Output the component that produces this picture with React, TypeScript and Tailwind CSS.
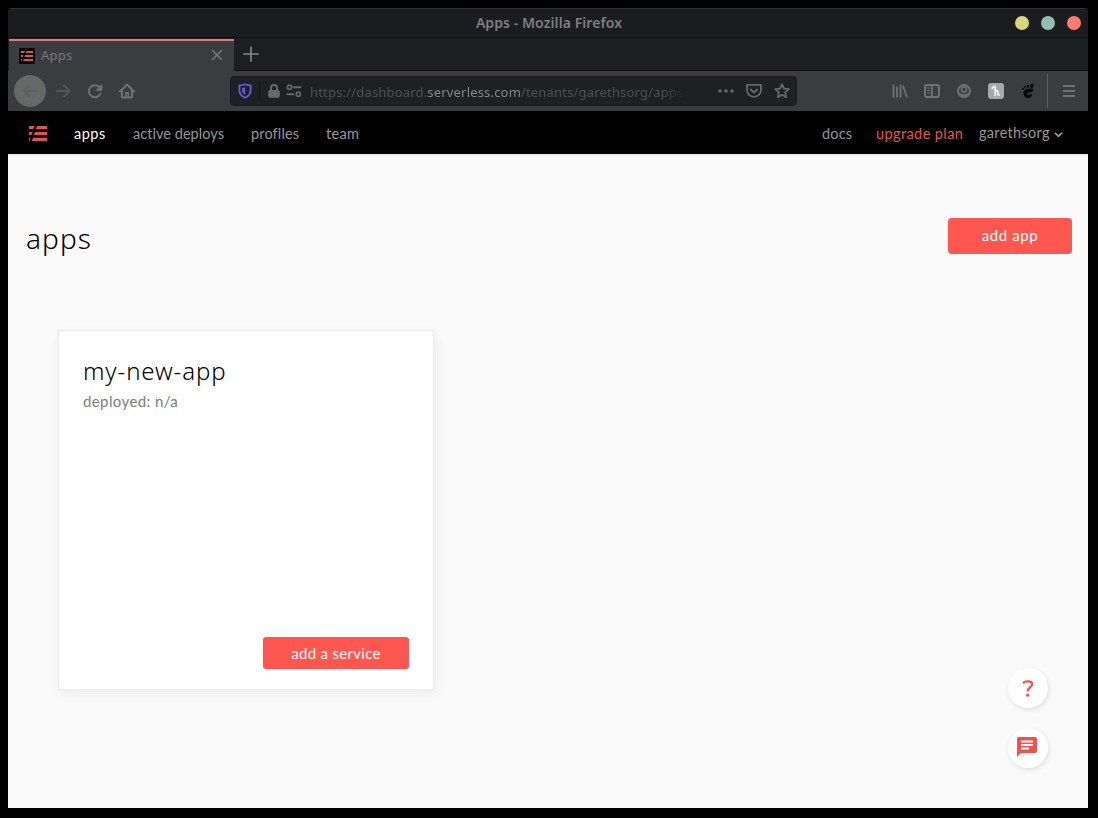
import React from "react";

const chrome = "font-['Noto_Sans',sans-serif]";
const page = "font-['Lato','Noto_Sans',sans-serif]";

function Logo({ className }: { className: string }) {
  return (
    <svg viewBox="0 0 18 15" className={className} fill="currentColor" preserveAspectRatio="none">
      <path d="M0 0h5.500L4.300 3.200H0zM8 0H18v3.200H6.800zM0 5.900h3.600L2.400 9.100H0zM6 5.900H18v3.200H4.800zM0 11.800h1.700L.5 15H0zM4 11.800H18V15H2.800z" />
    </svg>
  );
}

type IconProps = { className?: string; children: React.ReactNode };

function Icon({ className = "h-4 w-4", children }: IconProps) {
  return (
    <svg
      viewBox="0 0 16 16"
      className={`shrink-0 ${className}`}
      fill="none"
      stroke="currentColor"
      strokeWidth="2"
      strokeLinecap="round"
      strokeLinejoin="round"
    >
      {children}
    </svg>
  );
}

function TitleBar() {
  return (
    <div className="flex h-[30px] shrink-0 items-center rounded-t-[3px] border-t border-[#303133] border-b border-b-[#101113] bg-[#1b1c1f]">
      <div className="w-[106px]" />
      <div className="flex-1 pb-[2px] text-center">
        <span className="-ml-[22px] text-[14px] font-semibold leading-none tracking-[0.08px] text-[#7d7e82] whitespace-nowrap">
          Apps - Mozilla Firefox
        </span>
      </div>
      <div className="flex w-[82px] gap-3 pl-[9px]">
        <span className="h-[14px] w-[14px] rounded-full bg-[#d8d67c]" />
        <span className="h-[14px] w-[14px] rounded-full bg-[#97bcb1]" />
        <span className="h-[14px] w-[14px] rounded-full bg-[#ff7c70]" />
      </div>
    </div>
  );
}

function TabBar() {
  return (
    <div className="flex h-[33px] shrink-0 bg-[#1b1f22] pl-px pt-px">
      <div className="flex w-[225px] items-center border-t-2 border-[#d57e7c] bg-[#3b3c3f] pl-[10px] pr-[11px]">
        <div className="mb-px flex h-4 w-4 items-center justify-center bg-black text-[#dc5553]">
          <svg viewBox="0 0 12 10" className="h-[10px] w-3" fill="currentColor">
            <path d="M0 0h4L3.200 2H0zM5.600 0H12v2H4.800zM0 4h2.500L1.700 6H0zM4.200 4H12v2H3.400zM0 8h1.200L.5 10H0zM2.800 8H12v2H2z" />
          </svg>
        </div>
        <span className="ml-[6px] flex-1 pb-[2px] text-[13px] leading-none tracking-[0.2px] text-[#77787b]">Apps</span>
        <Icon className="mb-[2px] h-3 w-3 text-[#77787b]">
          <path d="M2 2l12 12M14 2L2 14" />
        </Icon>
      </div>
      <div className="flex flex-1 items-center border-b border-[#0d0f11] pl-[9px] pb-px text-[#85878a]">
        <Icon>
          <path d="M8 1v14M1 8h14" strokeWidth="1.700" />
        </Icon>
      </div>
    </div>
  );
}

function AddressBar() {
  return (
    <div className="flex h-[30px] w-[567px] items-center rounded-[4px] border border-[#191c1f] bg-[#1e2123] pl-[6px] pr-[6px] text-[#66686a]">
      <Icon className="h-4 w-4 text-[#6958d8]">
        <path d="M8 1.2c2 .9 4 1.2 5.600 1.200v4.800c0 3.500-2.200 6-5.600 7.600-3.400-1.600-5.600-4.100-5.600-7.600V2.400C4 2.400 6 2.100 8 1.200z" strokeWidth="1.8" />
        <path d="M8.200 4.300v7.600C6 10.500 5 9 5 7V5c1.200 0 2.200-.3 3.200-.7z" fill="currentColor" stroke="none" />
      </Icon>
      <div className="ml-[6px] h-5 w-px bg-[#121417]" />
      <Icon className="ml-[6px] h-4 w-4">
        <path d="M5 7.500V5a3 3 0 0 1 6 0v2.500" />
        <rect x="2.700" y="7.500" width="10.600" height="6.700" rx="1" fill="currentColor" strokeWidth="1" />
      </Icon>
      <Icon className="ml-[4px] h-4 w-4">
        <circle cx="3.500" cy="4.200" r="2.100" strokeWidth="1.700" />
        <circle cx="12.300" cy="11.300" r="2.100" strokeWidth="1.700" />
        <path d="M8 4.200h6.500M1.500 11.300h6" strokeWidth="2" />
      </Icon>
      <div className="ml-2 w-[386px] whitespace-nowrap pt-px text-[13px] leading-[20px] tracking-[0.18px] text-[#4d4f52] [mask-image:linear-gradient(to_right,black_352px,transparent_374px)]">
        https://dashboard.<span className="text-[#858789]">serverless.com</span>/tenants/garethsorg/apps
      </div>
      <div className="flex flex-1 justify-end gap-3">
        <Icon>
          <path d="M2 8h.01M8 8h.01M14 8h.01" strokeWidth="3.600" />
        </Icon>
        <Icon>
          <path d="M1 1.800h14v5.500a7 6.500 0 0 1-14 0z" strokeWidth="1.800" />
          <path d="M4.800 6.500L8 9.500l3.200-3" />
        </Icon>
        <Icon>
          <path d="M8 1.200l2 4.400 4.800.5-3.600 3.200 1 4.900L8 11.800l-4.200 2.400 1-4.900L1.200 6.100 6 5.600z" strokeWidth="1.800" />
        </Icon>
      </div>
    </div>
  );
}

function Toolbar() {
  return (
    <div className="flex h-[40px] shrink-0 items-center bg-[#3b3c3f] pl-[6px] text-[#707173]">
      <div className="flex h-8 w-8 items-center justify-center rounded-full bg-[#666767] text-[#606161]">
        <Icon>
          <path d="M14 8H2M7 3L2 8l5 5" />
        </Icon>
      </div>
      <Icon className="ml-[9px] h-4 w-4 text-[#545558]">
        <path d="M1.500 8h13M9 2.500L14.500 8 9 13.500" strokeWidth="1.800" />
      </Icon>
      <Icon className="ml-4 h-4 w-4">
        <path d="M12.800 4.800A6 6 0 1 0 13.500 10.500" />
        <path d="M15 1.500v6H9z" fill="currentColor" strokeWidth=".6" />
      </Icon>
      <Icon className="ml-4 h-4 w-4">
        <path d="M1 8.500L8 1.500l7 7M3 8v6.500h10V8" />
        <path d="M6.800 14V9.800h2.400V14" strokeWidth="1.700" />
      </Icon>
      <div className="ml-[95px]">
        <AddressBar />
      </div>
      <Icon className="ml-[95px] h-4 w-4">
        <path d="M1.500 1.500v13M5 3.500v11M8.500 1.500v13M10.800 2.500l4.200 12" strokeLinecap="butt" strokeWidth="1.800" />
      </Icon>
      <Icon className="ml-4 h-4 w-4">
        <rect x="1" y="2" width="14" height="12" rx="2" strokeWidth="2" />
        <path d="M8 2v12" strokeWidth="1.800" />
        <path d="M3.500 5H6M3.500 7.500H6M3.500 10H6" strokeWidth="1" />
      </Icon>
      <Icon className="ml-4 h-4 w-4">
        <circle cx="8" cy="8" r="6" />
        <circle cx="8" cy="6.500" r="2.500" strokeWidth="1.600" />
        <path d="M3.500 10.200c2.500 1.800 6.500 1.800 9 0-.6 2-2.200 3.300-4.500 3.300s-3.900-1.300-4.500-3.300z" fill="currentColor" strokeWidth=".5" />
      </Icon>
      <svg viewBox="0 0 16 16" className="ml-4 h-4 w-4 shrink-0">
        <rect width="16" height="16" rx="3" fill="#a7a8a9" />
        <path
          d="M4.200 5.500C5 3.800 7 2.800 7.200 4v8.300M7.200 8.800c.8-1.500 2.800-1.500 2.700.2v2.500l1.400.3"
          fill="none"
          stroke="#f2f2f2"
          strokeWidth="1.800"
          strokeLinecap="round"
        />
      </svg>
      <svg viewBox="0 0 16 16" className="ml-4 h-4 w-4 shrink-0" fill="#08090a">
        <path d="M12.800 5.800C10 5 3.600 5.600 3.600 9.900c0 3 2 5.100 4.700 5.100 2 0 3.600-1.100 3.600-2.900 0-1.300-1.100-1.800-2.100-1.200-.7.400-1.100 1.200-1.900 1-1.300-.4-.5-2 .9-2.300 2.500-.7 5.500-1 4-3.800z" />
        <ellipse cx="11.900" cy="2.800" rx="1.700" ry="2.200" transform="rotate(20 11.900 2.800)" />
        <ellipse cx="8" cy="3.200" rx="1.100" ry="1.500" />
        <ellipse cx="5.200" cy="4.200" rx=".9" ry="1.300" transform="rotate(-15 5.200 4.200)" />
        <ellipse cx="3" cy="5.800" rx=".8" ry="1.100" transform="rotate(-25 3 5.800)" />
      </svg>
      <div className="ml-[11px] h-[34px] w-px bg-[#5e6062]" />
      <Icon className="ml-[13px] h-4 w-4">
        <path d="M2 3h12M2 8h12M2 13h12" strokeLinecap="butt" strokeWidth="1.800" />
      </Icon>
    </div>
  );
}

function SiteNav() {
  return (
    <nav className="flex h-[43px] shrink-0 items-center bg-black pl-[21px] pr-[25px] text-[14.500px] leading-5 text-[#989898] whitespace-nowrap">
      <Logo className="mt-px h-[15px] w-[18px] text-[#dc5553]" />
      <span className="ml-[27px] w-[59px] pt-[3px] tracking-[0.5px] text-white">apps</span>
      <span className="w-[118px] pt-[3px] tracking-[0.04px]">active deploys</span>
      <span className="w-[75px] pt-[3px] tracking-[0.15px]">profiles</span>
      <span className="flex-1 pt-[3px] tracking-[0.35px]">team</span>
      <span className="w-[54px] pt-[3px] tracking-[0.2px]">docs</span>
      <span className="w-[103px] pt-[3px] tracking-[0.4px] text-[#ed544e]">upgrade plan</span>
      <span className="w-[75px] pt-px tracking-[0.3px]">garethsorg</span>
      <svg viewBox="0 0 9 9" className="mt-[4px] h-[9px] w-[9px]" fill="none" stroke="currentColor" strokeWidth="1.800">
        <path d="M1 2.800l3.500 3.400L8 2.800" />
      </svg>
    </nav>
  );
}

function AppCard() {
  return (
    <section className="flex h-[360px] w-[376px] flex-col border border-[#ebebeb] bg-white px-6 pb-5 pt-6 shadow-[2px_4px_12px_rgba(0,0,0,0.06)]">
      <h2 className="font-['Noto_Sans',sans-serif] text-[24px] font-light leading-8 tracking-[0.9px] text-black">my-new-app</h2>
      <p className="mt-[2px] text-[15px] leading-6 tracking-[0.4px] text-[#7b7b7b]">deployed: n/a</p>
      <button className="mt-auto h-8 w-[146px] self-end rounded-[3px] bg-[#fd5750] text-[15px] tracking-[0.3px] text-white">
        add a service
      </button>
    </section>
  );
}

function HelpButtons() {
  return (
    <div className="absolute bottom-10 right-10 flex flex-col gap-5">
      <button className="flex h-10 w-10 items-center justify-center rounded-full bg-white shadow-[1px_2px_5px_rgba(0,0,0,0.11)]">
        <svg viewBox="0 0 12 17" className="-ml-px h-[17px] w-3" fill="none" stroke="#ed544e" strokeWidth="2.300">
          <path d="M1 3.300C3 .9 9.900.4 10.200 4.200c.2 3.100-4.500 3-4.500 7.300" />
          <circle cx="5.700" cy="15.200" r="1.600" fill="#ed544e" stroke="none" />
        </svg>
      </button>
      <button className="flex h-10 w-10 items-center justify-center rounded-full bg-white shadow-[1px_2px_5px_rgba(0,0,0,0.11)]">
        <svg viewBox="0 0 20 20" className="-mt-[3px] -ml-[2px] h-5 w-5">
          <path d="M2 0h16a2 2 0 0 1 2 2v12a2 2 0 0 1-2 2H4l-4 4V2a2 2 0 0 1 2-2z" fill="#ed544e" />
          <path d="M4 4.500h12M4 8h12M4 11.500h8" stroke="#fff" strokeWidth="1.800" />
        </svg>
      </button>
    </div>
  );
}

export default function App() {
  return (
    <div className={`h-[818px] w-[1098px] bg-black px-[10px] py-2 pl-2 ${chrome}`}>
      <div className="flex h-[800px] w-[1080px] flex-col overflow-hidden rounded-t-[3px]">
        <TitleBar />
        <TabBar />
        <Toolbar />
        <div className={`relative flex flex-1 flex-col bg-[#fafafa] ${page}`}>
          <SiteNav />
          <div className="h-1 shrink-0 bg-linear-to-b from-[#e9e9e9] to-[#fafafa]" />
          <header className="mt-[60px] flex h-[42px] items-start justify-between pl-[18px] pr-4">
            <h1 className="font-['Noto_Sans',sans-serif] text-[28px] font-light leading-[40px] tracking-[1.1px] text-black">apps</h1>
            <button className="h-9 w-[124px] rounded-[4px] bg-[#fd5750] pb-[2px] text-[15px] tracking-[0.6px] text-white">add app</button>
          </header>
          <main className="mt-[70px] pl-[50px]">
            <AppCard />
          </main>
          <HelpButtons />
        </div>
      </div>
    </div>
  );
}
